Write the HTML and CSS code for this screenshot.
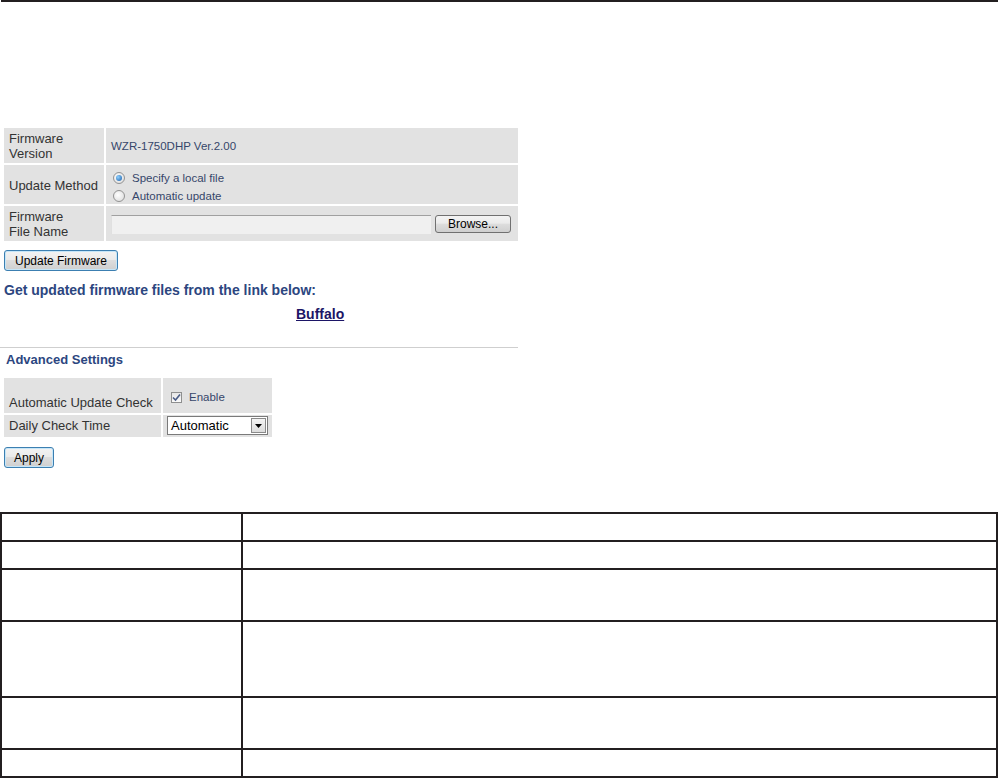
FILE: index.html
```html
<!DOCTYPE html>
<html>
<head>
<meta charset="utf-8">
<link rel="stylesheet" href="styles.css">
</head>
<body>
<div class="topbar"></div>
<main class="page">
  <div class="panel">
    <div class="grid fw">
      <div class="lbl">Firmware<br>Version</div>
      <div class="val small">WZR-1750DHP Ver.2.00</div>
      <div class="lbl">Update Method</div>
      <div class="val small radios">
        <label class="opt"><span class="radio on"></span>Specify a local file</label>
        <label class="opt"><span class="radio"></span>Automatic update</label>
      </div>
      <div class="lbl">Firmware<br>File Name</div>
      <div class="val filerow">
        <span class="fileinput"></span>
        <button class="btn gray browse">Browse...</button>
      </div>
    </div>
    <button class="btn blue upd">Update Firmware</button>
    <p class="note">Get updated firmware files from the link below:</p>
    <p class="linkline"><a class="buffalo" href="#">Buffalo</a></p>
    <div class="rule"></div>
    <h2 class="adv">Advanced Settings</h2>
    <div class="grid advgrid">
      <div class="lbl bottom">Automatic Update Check</div>
      <div class="val small top">
        <label class="opt"><span class="check"><svg width="9" height="9" viewBox="0 0 9 9"><path d="M1 4.5 L3.5 7 L8 1.5" fill="none" stroke="#4a5c86" stroke-width="1.6"/></svg></span>Enable</label>
      </div>
      <div class="lbl">Daily Check Time</div>
      <div class="val sel">
        <div class="select"><span class="seltext">Automatic</span><span class="arrow"><svg width="7" height="4" viewBox="0 0 7 4"><path d="M0 0 H7 L3.5 4 Z" fill="#000"/></svg></span></div>
      </div>
    </div>
    <button class="btn blue apply">Apply</button>
  </div>
  <table class="doc">
    <tr class="r1"><td class="c1"></td><td></td></tr>
    <tr class="r1"><td class="c1"></td><td></td></tr>
    <tr class="r2"><td class="c1"></td><td></td></tr>
    <tr class="r3"><td class="c1"></td><td></td></tr>
    <tr class="r2"><td class="c1"></td><td></td></tr>
    <tr class="r1"><td class="c1"></td><td></td></tr>
  </table>
</main>
</body>
</html>
```

FILE: styles.css
```css
* { box-sizing: border-box; }
html, body { margin: 0; padding: 0; background: #fff; }
body { font-family: "Liberation Sans", Arial, sans-serif; color: #333; width: 998px; }

.topbar { height: 2px; background: #231f20; margin-left: 1px; }

.page { padding-top: 126px; }
.panel { padding-left: 4px; }

.grid { display: grid; gap: 2px; }
.fw { width: 514px; grid-template-columns: 100px 1fr; grid-template-rows: 35px 39px 35px; row-gap: 2px; }
.lbl, .val { background: #e2e2e2; display: flex; align-items: center; }
.lbl { padding-left: 5px; font-size: 13px; line-height: 15px; color: #333; padding-top: 1px; }
.val { padding-left: 5px; }
.small { font-size: 11.5px; color: #36466a; }

.radios { flex-direction: column; align-items: flex-start; justify-content: center; gap: 3px; padding-left: 7px; padding-top: 5px; }
.opt { display: flex; align-items: center; line-height: 15px; }
.radio { width: 12px; height: 12px; border-radius: 50%; border: 1px solid #939393; background: radial-gradient(circle at 40% 40%, #fff, #d8d8d8); margin-right: 7px; position: relative; }
.radio.on::after { content: ""; position: absolute; left: 2px; top: 2px; width: 6px; height: 6px; border-radius: 50%; background: radial-gradient(circle at 35% 35%, #8fd0ff, #1a5ea8); }

.filerow { padding-left: 5px; gap: 4px; }
.fileinput { width: 320px; height: 19px; background: #f0f0f0; border-top: 1px solid #a0a0a0; border-left: 1px solid #e0e0e0; margin-top: 1px; }

.btn { font-family: "Liberation Sans", Arial, sans-serif; font-size: 12px; color: #000; background: linear-gradient(#f3f3f3 0%, #ebebeb 45%, #dddddd 50%, #cfcfcf 100%); border-radius: 3px; padding: 0; cursor: default; display: block; }
.btn.gray { border: 1px solid #707070; }
.btn.blue { border: 1px solid #3c7fb1; box-shadow: inset 0 0 0 1px #c6e6f8; }
.browse { width: 76px; height: 18px; line-height: 16px; font-size: 12px; }
.upd { width: 114px; height: 21px; margin-top: 9px; }

.note { margin: 11px 0 0 0; font-size: 14px; font-weight: bold; color: #2c4680; line-height: 16px; }
.linkline { margin: 8px 0 0 0; padding-left: 292px; line-height: 16px; font-size: 14px; }
.buffalo { font-weight: bold; color: #1c1566; text-decoration: underline; }

.rule { width: 518px; height: 1px; background: #cfcfcf; margin: 25px 0 0 -4px; }
.adv { margin: 4px 0 0 2px; font-size: 13px; font-weight: bold; color: #2c4680; line-height: 15px; }

.advgrid { width: 268px; grid-template-columns: 157px 109px; grid-template-rows: 35px 22px; margin-top: 11px; }
.bottom { align-items: flex-end; padding-bottom: 3px; }
.top { align-items: flex-start; padding-top: 12px; padding-left: 8px; }
.check { width: 11px; height: 11px; border: 1px solid #8e8f8f; background: linear-gradient(#e6e6e6, #fafafa); display: inline-flex; align-items: center; justify-content: center; margin-right: 7px; }
.sel { padding-left: 4px; align-items: flex-start; padding-top: 1px; }
.advgrid .lbl:nth-child(3) { align-items: flex-start; padding-top: 3px; }
.select { width: 101px; height: 19px; background: #fff; border: 1px solid #7a7a7a; display: flex; align-items: center; justify-content: space-between; padding-left: 3px; }
.seltext { font-size: 13px; color: #000; }
.arrow { width: 15px; height: 15px; margin-right: 1px; border: 1px solid #8a8a8a; background: linear-gradient(#f4f4f4, #dcdcdc); display: flex; align-items: center; justify-content: center; }

.apply { width: 50px; height: 21px; margin-top: 10px; font-size: 12px; }

.doc { border-collapse: collapse; width: 998px; margin-top: 44px; }
.doc td { border: 2px solid #231f20; padding: 0; }
.doc .c1 { width: 241px; }
.r1 td { height: 28px; }
.r2 td { height: 52px; }
.r3 td { height: 76px; }
```
